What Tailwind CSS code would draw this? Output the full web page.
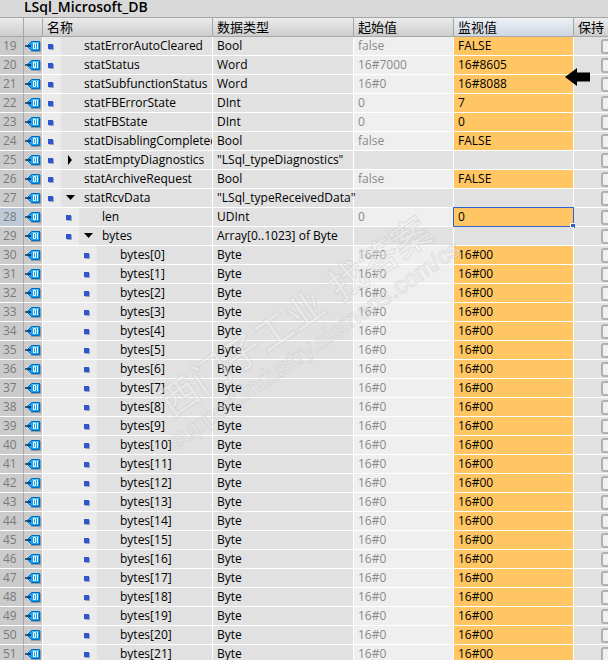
<!DOCTYPE html>
<html lang="zh-CN">
<head>
    <meta charset="UTF-8">
    <meta name="viewport" content="width=device-width, initial-scale=1.0">
    <title>LSql_Microsoft_DB</title>
    <script src="https://cdn.jsdelivr.net/npm/@tailwindcss/browser@4"></script>
</head>
<body class="relative h-screen overflow-hidden bg-[#d9d9d9] font-['Open_Sans','Noto_Sans_CJK_SC',sans-serif] text-xs text-black">

<!-- Иконка тега, общая для всех строк -->
<svg class="absolute size-0">
    <symbol id="tag" viewBox="0 0 16 12">
        <path d="M6 11.500H15.500V2" fill="none" stroke="#8f9aa5"/>
        <path d="M2 6 6.500 1.500H14.500V10.500H6.500Z" fill="#12a4f6" stroke="#0068b8"/>
        <path d="M7 2.500H14" stroke="#4cc4ff"/>
        <path d="M0 6H4" stroke="#063a66" stroke-width="1.500"/>
        <path d="M4 5H6V7H4Z" fill="#063a66"/>
        <path d="M8.500 3.500H10.500V8.500H8.500ZM12.500 3V9" fill="none" stroke="#fff"/>
    </symbol>
</svg>

<h1 class="h-[17px] pl-6 text-sm leading-[14px] font-semibold">LSql_Microsoft_DB</h1>

<table class="w-full table-fixed border-separate border-spacing-0">
    <colgroup>
        <col class="w-6">
        <col class="w-[19px]">
        <col class="w-[170px]">
        <col class="w-[141px]">
        <col class="w-[100px]">
        <col class="w-[120px]">
        <col>
    </colgroup>
    <thead>
    <tr class="h-5 text-left text-[13px] leading-4 whitespace-nowrap [&>th]:border-y [&>th]:border-[#a6a6a6] [&>th]:bg-linear-to-b [&>th]:from-[#ececec] [&>th]:to-[#cdcdcd] [&>th]:p-0 [&>th]:font-normal">
        <th class="border-r"></th>
        <th class="border-r"></th>
        <th class="border-r"><span class="pl-1">名称</span></th>
        <th class="border-r"><span class="pl-1">数据类型</span></th>
        <th class="border-r"><span class="pl-1">起始值</span></th>
        <th class="border-r from-[#eef2f7]! to-[#cfd6e0]!"><span class="pl-1">监视值</span></th>
        <th><span class="pl-1">保持</span></th>
    </tr>
    </thead>
    <tbody id="rows"></tbody>
</table>

<!-- Водяной знак -->
<svg class="pointer-events-none absolute top-0 left-0" width="608" height="660">
    <g transform="translate(178 448) rotate(-34.500)" fill="#f4f4f4" fill-opacity="0.4" stroke="#b4b4b4" stroke-opacity="0.4" stroke-width="1" paint-order="stroke">
        <text x="12" y="-28" font-size="38" font-weight="500" font-family="Noto Sans CJK SC, sans-serif">西门子工业</text>
        <text x="216" y="-28" font-size="38" font-weight="500" font-family="Noto Sans CJK SC, sans-serif">找答案</text>
        <text x="-3" y="0" font-size="24" font-family="Liberation Sans, sans-serif">support.industry.siemens.com/cs</text>
    </g>
</svg>

<svg class="pointer-events-none absolute top-[68px] left-[565px]" width="26" height="18">
    <path d="M0 9 12 0V4.500H25V13.500H12V18Z" fill="#000"/>
</svg>

<script>
    // [имя, тип, начальное значение, текущее значение, уровень, стрелка]
    const rows = [
        ['statErrorAutoCleared', 'Bool', 'false', 'FALSE', 0],
        ['statStatus', 'Word', '16#7000', '16#8605', 0],
        ['statSubfunctionStatus', 'Word', '16#0', '16#8088', 0],
        ['statFBErrorState', 'DInt', '0', '7', 0],
        ['statFBState', 'DInt', '0', '0', 0],
        ['statDisablingCompleted', 'Bool', 'false', 'FALSE', 0],
        ['statEmptyDiagnostics', '"LSql_typeDiagnostics"', '', '', 0, 'right'],
        ['statArchiveRequest', 'Bool', 'false', 'FALSE', 0],
        ['statRcvData', '"LSql_typeReceivedData"', '', '', 0, 'down'],
        ['len', 'UDInt', '0', '0', 1],
        ['bytes', 'Array[0..1023] of Byte', '', '', 1, 'down'],
    ];
    for (let i = 0; i < 22; i++) {
        rows.push([`bytes[${i}]`, 'Byte', '16#0', '16#00', 2]);
    }

    const indent = ['w-[18px]', 'w-[36px]', 'w-[54px]'];
    const arrows = {
        right: '<svg width="18" height="18"><path d="M7 4V14L11 9Z"/></svg>',
        down: '<svg width="18" height="18"><path d="M5 6H14L9.500 11Z"/></svg>',
    };

    document.getElementById('rows').innerHTML = rows.map(([name, type, start, value, level, arrow], i) => {
        const num = i + 19;
        const selected = name === 'len';
        return `
        <tr class="h-[19px] leading-[18px] whitespace-nowrap [&>td]:border-b [&>td]:border-white [&>td]:p-0">
            <td class="border-r border-r-[#a6a6a6]! pl-[3px]! text-[#7a7a7a] ${selected ? 'bg-[#bfcad8]' : 'bg-[#cbcbcb]'}">${num}</td>
            <td class="border-r bg-[#cbcbcb]"><svg class="ml-px" width="16" height="12"><use href="#tag"/></svg></td>
            <td class="border-r bg-[#e1e1e1]">
                <div class="flex h-[18px] overflow-hidden">
                    <span class="flex shrink-0 items-center justify-end bg-[#ebebeb] pr-2 ${indent[level]}"><i class="size-[5px] bg-[#2f55cf] shadow-[1px_1px_0_#9aa5c4]"></i></span>
                    <span class="w-[23px] shrink-0">${arrow ? arrows[arrow] : ''}</span>
                    <span>${name}</span>
                </div>
            </td>
            <td class="border-r bg-[#e1e1e1] pl-1!">${type}</td>
            <td class="border-r pl-1! text-[#8a8a8a] ${start ? 'bg-[#efefef]' : 'bg-[#e1e1e1]'}">${start}</td>
            <td class="relative border-r pl-1! ${value ? 'bg-[#ffc663]' : 'bg-[#e1e1e1]'}">${value}${selected ? `
                <span class="absolute -inset-px border border-[#2f62cf]"></span>
                <span class="absolute -right-0.5 -bottom-0.5 size-[5px] border-t border-l border-white bg-[#2f62cf]"></span>` : ''}</td>
            <td class="overflow-hidden bg-[#e1e1e1] pl-[27px]!"><input type="checkbox" aria-label="保持 ${num}" class="block h-[15px] w-[15px] appearance-none rounded-[3px] border-2 border-[#b0b0b0] bg-[#f0f0f0]"></td>
        </tr>`;
    }).join('');
</script>
</body>
</html>
